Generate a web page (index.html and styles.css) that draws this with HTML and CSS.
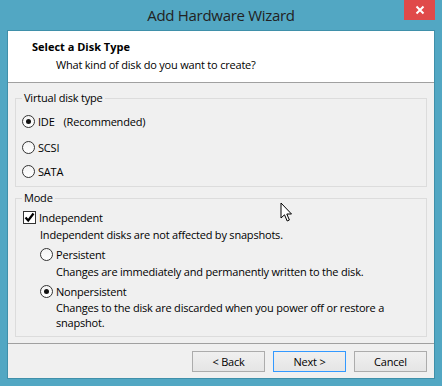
FILE: index.html
```html
<!DOCTYPE html>
<html lang="en">
<head>
  <meta charset="UTF-8" />
  <title>Add Hardware Wizard</title>
  <link rel="stylesheet" href="styles.css">
</head>
<body>

  <div class="window">
    <div class="titlebar">
      <span class="title">Add Hardware Wizard</span>
      <button class="close" type="button">
        <svg width="10" height="10" viewBox="0 0 10 10"><path d="M1.5 1.5 L8.5 8.5 M8.5 1.5 L1.5 8.5" stroke="#fff" stroke-width="2"/></svg>
      </button>
    </div>

    <div class="client">
      <div class="header">
        <div class="heading">Select a Disk Type</div>
        <div class="subheading">What kind of disk do you want to create?</div>
      </div>

      <div class="content">
        <fieldset class="group group-type">
          <legend>Virtual disk type</legend>
          <label class="option first"><span class="radio checked"></span>IDE<span class="hint">(Recommended)</span></label>
          <label class="option"><span class="radio"></span>SCSI</label>
          <label class="option"><span class="radio"></span>SATA</label>
        </fieldset>

        <fieldset class="group group-mode">
          <legend>Mode</legend>
          <label class="check-row"><span class="checkbox">
            <svg width="11" height="11" viewBox="0 0 11 11"><path d="M1.5 5.5 L4.2 8.5 L9.5 1.5" fill="none" stroke="#000" stroke-width="2.2"/></svg>
          </span>Independent</label>
          <div class="desc">Independent disks are not affected by snapshots.</div>

          <label class="sub-option"><span class="radio"></span>Persistent</label>
          <div class="sub-desc">Changes are immediately and permanently written to the disk.</div>

          <label class="sub-option"><span class="radio checked"></span>Nonpersistent</label>
          <div class="sub-desc two-line">Changes to the disk are discarded when you power off or restore a<br>snapshot.</div>
        </fieldset>
      </div>

      <div class="footer">
        <button type="button" class="btn">&lt; Back</button>
        <button type="button" class="btn default">Next &gt;</button>
        <button type="button" class="btn">Cancel</button>
      </div>
    </div>
  </div>

  <!-- mouse pointer caught in the screenshot -->
  <svg class="pointer" width="14" height="21" viewBox="0 0 14 21">
    <path d="M1 1 L1 16 L4.5 12.8 L7.2 19 L9.4 18 L6.8 12 L11.5 12 Z" fill="#fff" stroke="#000" stroke-width="1"/>
  </svg>

</body>
</html>
```

FILE: styles.css
```css
body {
  margin: 0;
  background-color: #52a7c3;
  font-family: "Open Sans", "Noto Sans", sans-serif;
  font-size: 11px;
  letter-spacing: -0.2px;
  color: #000;
}

.window {
  width: 442px;
  height: 386px;
  display: flex;
  flex-direction: column;
}

.titlebar {
  height: 31px;
  display: grid;
  grid-template-columns: 1fr auto 1fr;
  align-items: start;
}

.title {
  grid-column: 2;
  font-size: 15px;
  letter-spacing: -0.3px;
  line-height: 31px;
  color: #222;
}

.close {
  grid-column: 3;
  justify-self: end;
  width: 31px;
  height: 20px;
  margin-right: 7px;
  padding: 0;
  border: none;
  background-color: #e04a4a;
  display: flex;
  align-items: center;
  justify-content: center;
}

.client {
  flex: 1;
  margin: 0 8px 8px;
  background-color: #f0f0f0;
  box-shadow: 0 0 0 1px #3f90aa;
  display: flex;
  flex-direction: column;
}

/* white banner at the top */
.header {
  height: 52px;
  box-sizing: border-box;
  background-color: #fff;
  border-bottom: 1px solid #a0a0a0;
  padding: 8px 0 0 24px;
}

.heading {
  font-weight: bold;
  line-height: 16px;
  letter-spacing: 0;
}

.subheading {
  line-height: 16px;
  margin-top: 2px;
  padding-left: 24px;
}

.content {
  flex: 1;
  padding: 8px 7px 0;
}

.group {
  margin: 0;
  padding: 0 0 0 6px;
  border: 1px solid #dcdcdc;
}

.group legend {
  margin-left: 0;
  padding: 0 2px;
  line-height: 14px;
}

.group-type {
  padding-top: 4px;
  padding-bottom: 3px;
}

.group-mode {
  margin-top: 4px;
  padding-top: 4px;
  padding-bottom: 6px;
}

.option {
  height: 24px;
  display: flex;
  align-items: center;
}

.option.first {
  margin-bottom: 2px;
}

.hint {
  margin-left: 9px;
}

.radio {
  width: 11px;
  height: 11px;
  border: 1px solid #333;
  border-radius: 50%;
  background: linear-gradient(#f4f4f4, #fff);
  margin-right: 3px;
  display: flex;
  align-items: center;
  justify-content: center;
  flex-shrink: 0;
}

.radio.checked::after {
  content: "";
  width: 5px;
  height: 5px;
  border-radius: 50%;
  background-color: #111;
}

.check-row {
  height: 16px;
  display: flex;
  align-items: center;
  padding-left: 1px;
}

.checkbox {
  width: 11px;
  height: 11px;
  border: 1px solid #333;
  background-color: #fff;
  margin-right: 3px;
  display: flex;
  align-items: center;
  justify-content: center;
}

.desc {
  line-height: 16px;
  margin: 2px 0 0 18px;
}

.sub-option {
  height: 16px;
  display: flex;
  align-items: center;
  margin: 3px 0 0 18px;
}

.sub-desc {
  line-height: 16px;
  margin: 2px 0 0 34px;
}

.sub-desc.two-line {
  line-height: 15px;
  margin-top: 1px;
}

.footer {
  height: 35px;
  border-top: 1px solid #a0a0a0;
  box-sizing: border-box;
  padding: 7px 7px 0 0;
  display: flex;
  justify-content: flex-end;
  gap: 8px;
}

.btn {
  width: 73px;
  height: 21px;
  padding: 0;
  font-family: inherit;
  font-size: 11px;
  letter-spacing: -0.2px;
  color: #000;
  border: 1px solid #acacac;
  background: linear-gradient(#f0f0f0, #e5e5e5);
}

.btn.default {
  border-color: #3399ff;
}

.pointer {
  position: absolute;
  left: 280px;
  top: 202px;
}
```
